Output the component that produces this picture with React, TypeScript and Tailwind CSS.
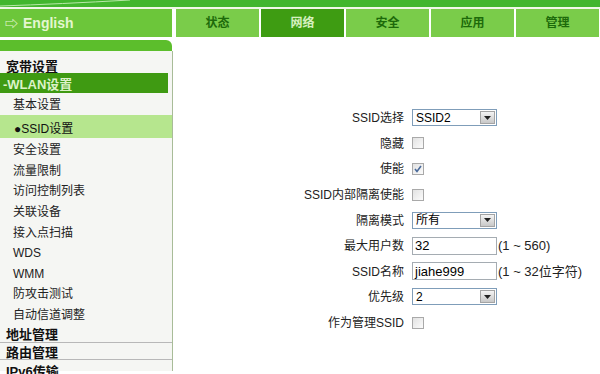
const tabs = ["状态", "网络", "安全", "应用", "管理"];

const subItems = ["安全设置", "流量限制", "访问控制列表", "关联设备", "接入点扫描", "WDS", "WMM", "防攻击测试", "自动信道调整"];

function Select({ value }: { value: string }) {
  return (
    <div className="flex h-[17px] w-[85px] items-center border border-[#7f9db9] bg-white">
      <span className="flex-1 pl-[3px] leading-none text-black">{value}</span>
      <span className="mr-[1px] flex h-[13px] w-[15px] items-center justify-center border border-[#a4a4a4] bg-gradient-to-b from-[#f4f4f4] to-[#c8c8c8]">
        <svg width="7" height="4" viewBox="0 0 7 4">
          <path d="M0 0h7L3.5 4z" fill="#222" />
        </svg>
      </span>
    </div>
  );
}

function Check({ on }: { on?: boolean }) {
  return (
    <span className="flex h-[12px] w-[12px] items-center justify-center border border-[#a9a9a9] bg-gradient-to-br from-[#e2e2e2] to-[#fbfbfb]">
      {on && (
        <svg width="8" height="8" viewBox="0 0 8 8">
          <path d="M1 4l2 2.5L7 1" stroke="#4a6a9a" strokeWidth="1.6" fill="none" />
        </svg>
      )}
    </span>
  );
}

function TextBox({ value }: { value: string }) {
  return (
    <div className="flex h-[18px] w-[85px] items-center border border-[#a5acb2] bg-white pl-[2px] text-[13px] leading-none text-black">
      {value}
    </div>
  );
}

function Row({ label, children }: { label: string; children: React.ReactNode }) {
  return (
    <div className="flex h-[25.6px] items-center">
      <div className="w-[231px] pt-[1px] text-right text-[#222]">{label}</div>
      <div className="ml-[8px] flex items-center">{children}</div>
    </div>
  );
}

export default function App() {
  return (
    <div className="h-[374px] w-[600px] overflow-hidden bg-white font-['Liberation_Sans','Noto_Sans_CJK_SC',sans-serif] text-[12px] leading-none">
      {/* top band */}
      <div className="relative h-[7px] bg-[#42b62e]">
        <svg className="absolute left-0 top-0" width="140" height="7" viewBox="0 0 140 7">
          <path d="M0 6 Q60 4 130 0" stroke="#b8e8a8" strokeWidth="1" fill="none" />
        </svg>
      </div>
      <div className="h-[2px] bg-[#f0f8e8]" />

      {/* nav row */}
      <div className="flex h-[28px]">
        <div className="flex w-[172px] items-center gap-[5px] bg-[#6cc63a] pl-[5px] text-[14px] font-bold text-[#e4f6d0]">
          <span className="text-[13px]">⇨</span>
          <span>English</span>
        </div>
        <div className="w-[4px]" />
        <div className="flex gap-[2px]">
          {tabs.map((t) => (
            <div
              key={t}
              className={
                t === "网络"
                  ? "flex w-[83px] items-center justify-center bg-[#3e9c12] font-bold text-[#d6f0c0]"
                  : "flex w-[83px] items-center justify-center bg-[#7acc4a] font-bold text-[#1d6a0a]"
              }
            >
              {t}
            </div>
          ))}
        </div>
      </div>
      <div className="h-[3px]" />

      <div className="flex">
        {/* sidebar */}
        <div className="w-[173px] shrink-0">
          <div className="h-[11px] w-[172px] rounded-tr-[6px] bg-[#5cbe2c]" />
          <div className="h-[320px] w-[173px] border-r border-[#a8bc98] bg-[#f5f6f3] pt-[5px]">
            <div className="flex h-[17px] items-center pl-[6px] pt-[4px] text-[13px] font-bold text-[#111]">宽带设置</div>
            <div className="flex h-[20px] w-[168px] items-center bg-[#3f9a12] pl-[3px] pt-[2px] text-[13px] font-bold text-[#dcf2c8]">-WLAN设置</div>
            <div className="flex h-[20px] items-center pl-[13px] pt-[3px] text-[#222]">基本设置</div>
            <div className="mt-[2px] flex h-[23px] items-center bg-[#b6e68e] pl-[14px] pt-[5px] text-[#111]">●SSID设置</div>
            {subItems.map((s) => (
              <div key={s} className="flex h-[20.6px] items-center pl-[13px] pt-[4px] text-[#222]">
                {s}
              </div>
            ))}
            <div className="flex h-[20px] items-center border-b border-[#b8b8b8] pl-[6px] pt-[4px] text-[13px] font-bold text-[#111]">地址管理</div>
            <div className="flex h-[17px] items-center border-b border-[#b8b8b8] pl-[6px] pt-[3px] text-[13px] font-bold text-[#111]">路由管理</div>
            <div className="flex h-[18px] items-center pl-[6px] pt-[4px] text-[13px] font-bold text-[#111]">IPv6传输</div>
          </div>
        </div>

        {/* form */}
        <div className="flex-1 pt-[65px]">
          <Row label="SSID选择"><Select value="SSID2" /></Row>
          <Row label="隐藏"><Check /></Row>
          <Row label="使能"><Check on /></Row>
          <Row label="SSID内部隔离使能"><Check /></Row>
          <Row label="隔离模式"><Select value="所有" /></Row>
          <Row label="最大用户数">
            <TextBox value="32" />
            <span className="ml-[1px] text-[13px] text-[#222]">(1 ~ 560)</span>
          </Row>
          <Row label="SSID名称">
            <TextBox value="jiahe999" />
            <span className="ml-[1px] text-[13px] text-[#222]">(1 ~ 32位字符)</span>
          </Row>
          <Row label="优先级"><Select value="2" /></Row>
          <Row label="作为管理SSID"><Check /></Row>
        </div>
      </div>
    </div>
  );
}
